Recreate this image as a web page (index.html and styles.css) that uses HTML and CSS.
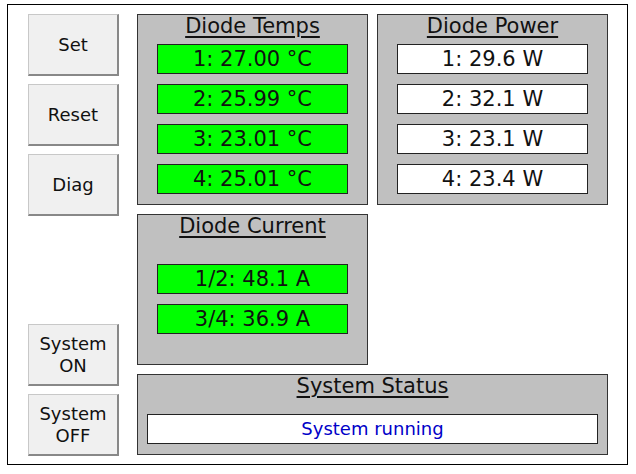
FILE: index.html
```html
<!DOCTYPE html>
<html lang="en">
<head>
  <meta charset="UTF-8" />
  <title>Diode Controller</title>
  <link rel="stylesheet" href="styles.css">
</head>
<body>
  <div class="frame">
    <div class="buttons">
      <button class="btn">Set</button>
      <button class="btn">Reset</button>
      <button class="btn">Diag</button>
      <button class="btn btn-bottom">System<br>ON</button>
      <button class="btn">System<br>OFF</button>
    </div>

    <div class="panels">
      <div class="panel">
        <div class="panel-title"><span>Diode Temps</span></div>
        <div class="fields">
          <div class="field ok">1: 27.00 °C</div>
          <div class="field ok">2: 25.99 °C</div>
          <div class="field ok">3: 23.01 °C</div>
          <div class="field ok">4: 25.01 °C</div>
        </div>
      </div>

      <div class="panel">
        <div class="panel-title"><span>Diode Power</span></div>
        <div class="fields">
          <div class="field">1: 29.6 W</div>
          <div class="field">2: 32.1 W</div>
          <div class="field">3: 23.1 W</div>
          <div class="field">4: 23.4 W</div>
        </div>
      </div>

      <div class="panel">
        <div class="panel-title"><span>Diode Current</span></div>
        <div class="fields fields-low">
          <div class="field ok">1/2: 48.1 A</div>
          <div class="field ok">3/4: 36.9 A</div>
        </div>
      </div>

      <div class="panel panel-status">
        <div class="panel-title"><span>System Status</span></div>
        <div class="status">System running</div>
      </div>
    </div>
  </div>
</body>
</html>
```

FILE: styles.css
```css
html, body {
  margin: 0;
  padding: 0;
  background: #fff;
  font-family: 'DejaVu Sans', sans-serif;
  color: #111;
}

.frame {
  box-sizing: border-box;
  width: 621px;
  height: 461px;
  margin: 4px 0 0 7px;
  border: 1px solid #000;
  padding: 9px 0 8px 20px;
  display: flex;
  gap: 18px;
}

.buttons {
  width: 91px;
  display: flex;
  flex-direction: column;
  gap: 8px;
}

.btn {
  box-sizing: border-box;
  width: 91px;
  height: 62px;
  padding: 0;
  background: #f0f0f0;
  border: 1px solid #c8c8c8;
  border-right: 2px solid #888;
  border-bottom: 2px solid #888;
  font-family: 'DejaVu Sans', sans-serif;
  font-size: 18px;
  line-height: 22px;
  color: #111;
  cursor: pointer;
}

.btn-bottom {
  margin-top: auto;
}

.panels {
  display: grid;
  grid-template-columns: 231px 231px;
  grid-template-rows: 191px 151px 81px;
  gap: 9px;
}

.panel {
  box-sizing: border-box;
  background: #c0c0c0;
  border: 1px solid #333;
}

.panel-status {
  grid-column: 1 / 3;
}

.panel-title {
  text-align: center;
  font-size: 21px;
  line-height: 22px;
  margin-bottom: 7px;
}

.panel-title span {
  text-decoration: underline;
  text-decoration-thickness: 2px;
  text-underline-offset: 3px;
}

.fields {
  display: flex;
  flex-direction: column;
  gap: 10px;
  padding: 0 19px;
}

.fields-low {
  margin-top: 27px;
}

.field {
  box-sizing: border-box;
  height: 30px;
  line-height: 28px;
  background: #fff;
  border: 1px solid #222;
  text-align: center;
  font-size: 21px;
}

.field.ok {
  background: #00ff00;
}

.status {
  box-sizing: border-box;
  height: 30px;
  margin: 17px 9px 0;
  line-height: 28px;
  background: #fff;
  border: 1px solid #222;
  text-align: center;
  font-size: 18px;
  color: #0000c8;
}
```
